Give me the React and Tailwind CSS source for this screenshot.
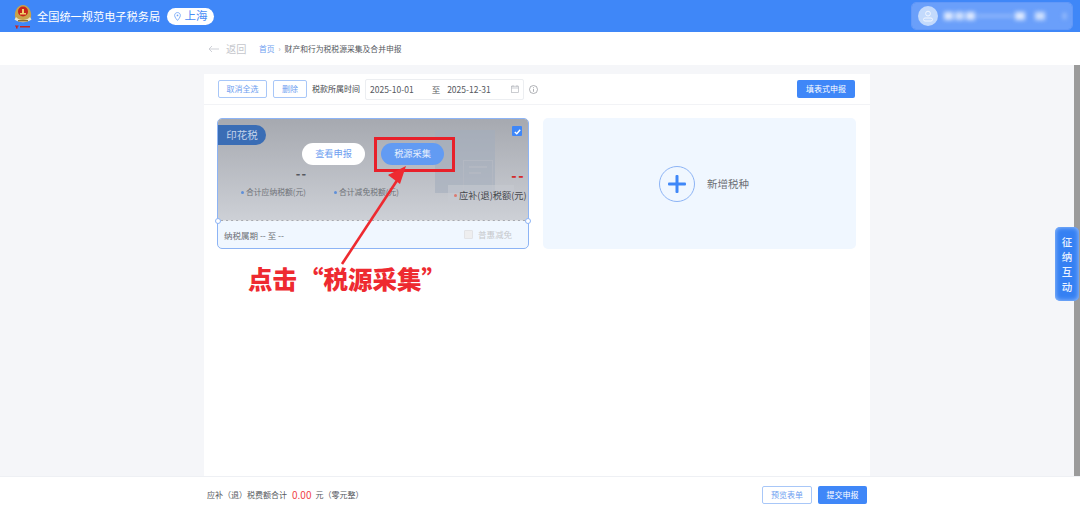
import React from "react";

const F = { fontFamily: '"Noto Sans CJK SC", "Noto Sans", sans-serif' };

function Emblem() {
  return (
    <svg width="20" height="26" viewBox="0 0 20 26">
      <path d="M2 14 C1 8 5 2 10 2 C15 2 19 8 18 14 C17 18 13 19 10 19 C7 19 3 18 2 14Z" fill="#c9a24a" />
      <circle cx="10" cy="8.5" r="5" fill="#c8251c" />
      <path d="M7 10h6v1.6H7zM9 6h2v4H9z" fill="#f1cf6b" />
      <path d="M3 14 C6 18 14 18 17 14 L18.5 16.5 C14 20 6 20 1.5 16.5Z" fill="#e9e2cc" />
      <path d="M5 17 h10 v1.5 h-10z" fill="#8f6f2c" />
      <path d="M3 22.5h1.6v3H3zM2 22.5h3.6v1H2zM7 23h10v1.6H7z" fill="#c8251c" />
    </svg>
  );
}

function Check() {
  return (
    <svg width="9" height="9" viewBox="0 0 10 10">
      <path d="M2 5.5 L4.2 7.5 L8 3" fill="none" stroke="#fff" strokeWidth="1.6" />
    </svg>
  );
}

function Notch({ side }) {
  return (
    <span
      className={
        side === "l"
          ? "absolute left-[-3px] top-[99px] z-20 h-[6px] w-[6px] rounded-full border border-[#8db4f5] bg-white"
          : "absolute right-[-3px] top-[99px] z-20 h-[6px] w-[6px] rounded-full border border-[#8db4f5] bg-white"
      }
    />
  );
}

function Stat({ value, label, className, dot, red }) {
  return (
    <div className={className}>
      <div className={red ? "mt-[2px] text-right text-[14px] font-black leading-[10px] tracking-[1.5px] text-[#d42a2a]" : "text-right text-[12px] font-black leading-[10px] tracking-[1px] text-[#55585f]"}>
        {value}
      </div>
      <div className={red ? "mt-[8px] flex items-center gap-[2px] whitespace-nowrap text-[9.2px] leading-[14px] text-[#45474c]" : "mt-[8px] flex items-center gap-[2px] whitespace-nowrap text-[7.8px] leading-[12px] text-[#6f7278]"}>
        <span className={dot} />
        {label}
      </div>
    </div>
  );
}

export default function App() {
  return (
    <div style={F} className="relative flex h-[512px] w-[1080px] flex-col overflow-hidden bg-white">
      {/* top bar */}
      <header className="flex h-8 shrink-0 items-center justify-between bg-[#3f87f8] pl-[13px] pr-[8px]">
        <div className="flex items-center">
          <Emblem />
          <span className="ml-1 text-[11.2px] text-white">全国统一规范电子税务局</span>
          <span className="ml-[7px] flex h-[17px] w-[47px] items-center justify-center gap-1 rounded-full bg-white text-[11.5px] text-[#4a8cf5]">
            <svg width="7" height="9" viewBox="0 0 8 10">
              <path d="M4 .5C2 .5.7 2 .7 3.8.7 6 4 9.5 4 9.5S7.3 6 7.3 3.8C7.3 2 6 .5 4 .5Z" fill="none" stroke="#6fa4f7" />
              <circle cx="4" cy="3.8" r="1" fill="#6fa4f7" />
            </svg>
            上海
          </span>
        </div>
        <div className="flex h-[26px] w-[160px] items-center rounded-[4px] bg-[#6a9ffa] pl-[6px] outline outline-1 outline-[#6298f8]">
          <span className="flex h-5 w-5 items-center justify-center rounded-full bg-[#c3dafc]">
            <svg width="12" height="12" viewBox="0 0 12 12" fill="none" stroke="#f2f7ff" strokeWidth="1">
              <circle cx="6" cy="3.6" r="2.4" />
              <rect x="1.5" y="8" width="9" height="3" rx="1.5" />
            </svg>
          </span>
          <span className="ml-[6px] flex items-center gap-[2px] blur-[2px]">
            <span className="h-2 w-[9px] bg-[#dfeafe]" />
            <span className="h-2 w-[9px] bg-[#cfe0fd]" />
            <span className="h-2 w-[9px] bg-[#dfeafe]" />
            <span className="h-[2px] w-9 bg-[#a9c8fb]" />
            <span className="h-2 w-[10px] bg-[#dfeafe]" />
            <span className="ml-2 h-2 w-[10px] bg-[#cfe0fd]" />
            <span className="ml-4 h-[6px] w-[3px] bg-[#a9c8fb]" />
          </span>
        </div>
      </header>

      {/* breadcrumb */}
      <div className="flex h-[33px] shrink-0 items-center bg-white pl-[208px]">
        <svg width="11" height="8" viewBox="0 0 11 8" fill="none" stroke="#c9ccd2" strokeWidth="0.9">
          <path d="M11 4H1M4 1 1 4l3 3" />
        </svg>
        <span className="ml-[7px] text-[10.2px] text-[#c4c6cb]">返回</span>
        <span className="ml-[12.5px] text-[7.8px] text-[#6d9ef0]">首页</span>
        <span className="mx-[4px] text-[7px] text-[#999]">›</span>
        <span className="text-[7.8px] text-[#55585e]">财产和行为税税源采集及合并申报</span>
      </div>

      {/* body row with scrollbar */}
      <div className="flex min-h-0 flex-1">
        <div className="flex min-w-0 flex-1 flex-col bg-[#f5f6f9] pt-[9px]">
          <main className="mx-auto flex min-h-0 w-[666px] flex-1 flex-col bg-white">
            <div className="flex h-[31px] shrink-0 items-center border-b border-[#f2f3f6] pl-[14px] pr-[15px]">
              <button className="h-[18px] w-[49px] rounded-[2px] border border-[#a8c7f8] text-[8px] text-[#6d9ef0]">取消全选</button>
              <button className="ml-[6px] h-[18px] w-[34px] rounded-[2px] border border-[#a8c7f8] text-[8px] text-[#6d9ef0]">删除</button>
              <span className="ml-[5px] text-[8px] text-[#44464b]">税款所属时间</span>
              <div className="ml-[5px] flex h-[21px] w-[159px] items-center rounded-[2px] border border-[#eceef1] pl-[4px] text-[8.5px] text-[#55585e]">
                <span>2025-10-01</span>
                <span className="ml-[18px]">至</span>
                <span className="ml-[7px]">2025-12-31</span>
                <svg className="ml-[20px]" width="8" height="8" viewBox="0 0 8 8" fill="none" stroke="#b5b8be" strokeWidth="0.7">
                  <rect x=".5" y="1.2" width="7" height="6.3" />
                  <path d="M2 0v2M6 0v2M.5 3h7" />
                </svg>
              </div>
              <svg className="ml-[5px]" width="9" height="9" viewBox="0 0 9 9" fill="none" stroke="#8c8f95" strokeWidth="0.7">
                <circle cx="4.5" cy="4.5" r="4" />
                <path d="M4.5 4v2.8M4.5 2.2v1" />
              </svg>
              <button className="ml-auto h-[18px] w-[58px] rounded-[2px] bg-[#3f87f8] text-[8px] text-white">填表式申报</button>
            </div>

            <div className="flex gap-[14px] pl-[13px] pt-[13px]">
              {/* stamp tax card */}
              <section className="relative flex h-[131px] w-[312px] flex-col rounded-[5px] border border-[#8db4f5] bg-[#f0f7ff]">
                <Notch side="l" />
                <Notch side="r" />
                <div className="relative h-[102px] rounded-t-[4px] border-b border-dashed border-white/70 bg-gradient-to-b from-[#a6a9b0] to-[#cdd0d6]">
                  {/* faint document art */}
                  <div className="absolute left-[217px] top-[11px] h-[63px] w-[60px] bg-[#a3adbd]/60" />
                  <div className="absolute left-[245px] top-[41px] flex h-[40px] w-[30px] flex-col gap-[4px] border border-[#b3b8c2] p-[5px]">
                    <span className="h-[2px] w-full bg-[#b3b8c2]" />
                    <span className="h-[2px] w-3 bg-[#b3b8c2]" />
                  </div>
                  <div className="absolute left-[230px] top-[66px] h-[20px] w-[66px] bg-[#c7cad0]/60" />

                  <span className="absolute left-0 top-[6px] flex h-5 w-12 items-center justify-center rounded-r-full bg-[#3a6db5] text-[10.5px] text-[#c4d3ea]">印花税</span>
                  <span className="absolute right-[6px] top-[7px] flex h-[10px] w-[10px] items-center justify-center rounded-[1px] bg-[#3f87f8]"><Check /></span>

                  <div className="relative flex pl-[84px] pt-[24px]">
                    <button className="h-[22px] w-[63px] rounded-full bg-white text-[9.2px] text-[#6d9ef0]">查看申报</button>
                    <button className="ml-[16px] h-[22px] w-[63px] rounded-full bg-[#629bf3] text-[9.2px] text-[#e8f0fd]">税源采集</button>
                  </div>

                  <div className="relative flex pl-[23px] pt-[3px]">
                    <Stat className="w-[66px]" value="--" label="合计应纳税额(元)" dot="h-[3px] w-[3px] shrink-0 rounded-full bg-[#5f8fd8]" />
                    <Stat className="ml-[27px] w-[66px]" value="--" label="合计减免税额(元)" dot="h-[3px] w-[3px] shrink-0 rounded-full bg-[#5f8fd8]" />
                    <Stat className="ml-[54px] w-[71px]" red value="--" label="应补(退)税额(元)" dot="h-[3px] w-[3px] shrink-0 rounded-full bg-[#dc7a70]" />
                  </div>
                </div>
                <div className="flex flex-1 items-center justify-between pl-[6px] pr-[16px]">
                  <span className="mt-[2px] text-[8.5px] text-[#6a6d73]">纳税属期 -- 至 --</span>
                  <span className="flex items-center gap-[5px] text-[8.5px] text-[#c6c8cc]">
                    <span className="h-[9px] w-[9px] rounded-[1px] border border-[#e2e3e6] bg-[#eeeeef]" />
                    普惠减免
                  </span>
                </div>
              </section>

              {/* add tax */}
              <section className="flex h-[131px] w-[313px] items-center rounded-[5px] bg-[#f0f7ff] pl-[116px]">
                <span className="flex h-9 w-9 items-center justify-center rounded-full border border-[#8db4f5]">
                  <svg width="18" height="18" viewBox="0 0 18 18" fill="#3f87f8">
                    <rect x="7.5" y="0" width="3" height="18" rx="1" />
                    <rect x="0" y="7.5" width="18" height="3" rx="1" />
                  </svg>
                </span>
                <span className="ml-3 text-[10.5px] text-[#6d7076]">新增税种</span>
              </section>
            </div>
          </main>
        </div>
        <div className="w-[6px] shrink-0 bg-[#9b9b9b]" />
      </div>

      {/* footer */}
      <footer className="flex h-[36px] shrink-0 items-center border-t border-[#eef0f4] bg-white pl-[207px] pr-[213px]">
        <span className="text-[8px] text-[#55585e]">应补（退）税费额合计</span>
        <span className="ml-[5px] text-[10px] text-[#f0444a]">0.00</span>
        <span className="ml-[4px] text-[8px] text-[#55585e]">元（零元整）</span>
        <button className="ml-auto h-[18px] w-[50px] rounded-[2px] border border-[#a8c7f8] text-[8px] text-[#6d9ef0]">预览表单</button>
        <button className="ml-[6px] h-[18px] w-[49px] rounded-[2px] bg-[#3f87f8] text-[8px] text-white">提交申报</button>
      </footer>

      {/* floating tab */}
      <div className="absolute left-[1055px] top-[227px] flex h-[74px] w-[24px] flex-col items-center justify-center rounded-[5px] bg-[#3580f3] text-[10.5px] font-medium leading-[15px] text-[#eaf2ff] shadow-[inset_0_0_5px_#a9c9fb]">
        <span>征</span>
        <span>纳</span>
        <span>互</span>
        <span>动</span>
      </div>

      {/* annotation */}
      <div className="absolute left-[374px] top-[137px] h-[35px] w-[81px] border-[3px] border-[#e8202a]" />
      <svg className="absolute left-[330px] top-[160px]" width="90" height="110" viewBox="0 0 90 110">
        <path d="M12 104 L68 19" stroke="#ee2a30" strokeWidth="2.6" fill="none" />
        <path d="M76 6 L58 15 L70 24 Z" fill="#ee2a30" />
      </svg>
      <span className="absolute left-[248px] top-[264px] flex text-[24.5px] font-black leading-[30px] text-[#ee2a30]">
        <span>点击</span>
        <span className="ml-[2px]">“税源采集”</span>
      </span>
    </div>
  );
}
